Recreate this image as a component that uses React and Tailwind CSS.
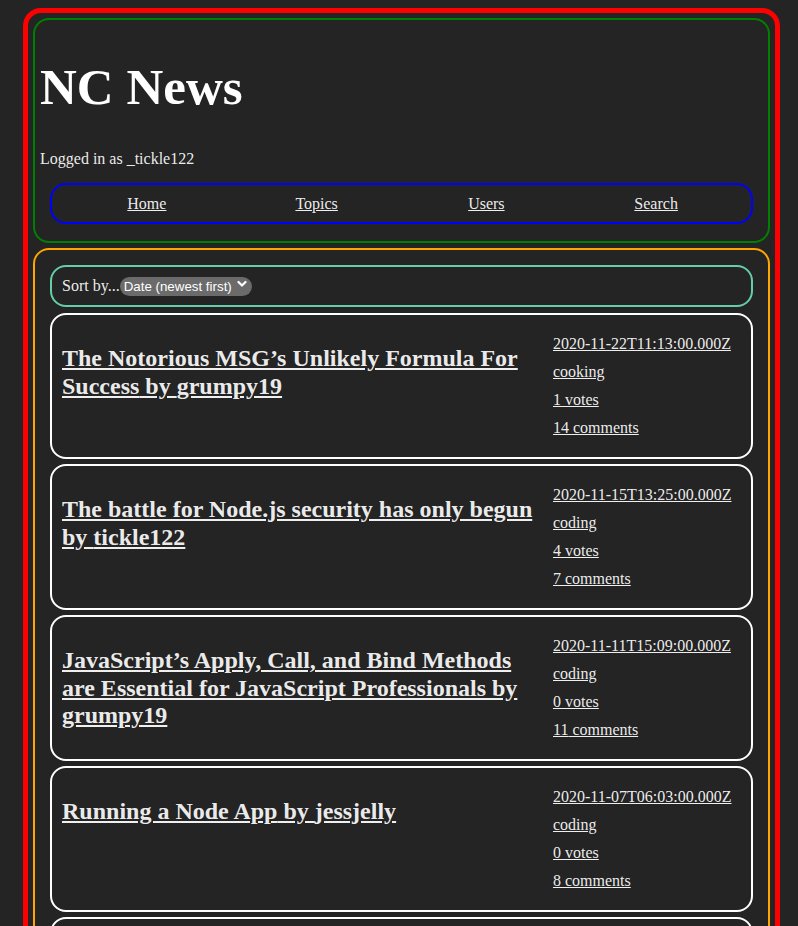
import React, { useState } from "react";

const articles = [
  {
    title: "The Notorious MSG’s Unlikely Formula For Success",
    author: "grumpy19",
    date: "2020-11-22T11:13:00.000Z",
    topic: "cooking",
    votes: 1,
    comments: 14,
  },
  {
    title: "The battle for Node.js security has only begun",
    author: "tickle122",
    date: "2020-11-15T13:25:00.000Z",
    topic: "coding",
    votes: 4,
    comments: 7,
  },
  {
    title: "JavaScript’s Apply, Call, and Bind Methods are Essential for JavaScript Professionals",
    author: "grumpy19",
    date: "2020-11-11T15:09:00.000Z",
    topic: "coding",
    votes: 0,
    comments: 11,
  },
  {
    title: "Running a Node App",
    author: "jessjelly",
    date: "2020-11-07T06:03:00.000Z",
    topic: "coding",
    votes: 0,
    comments: 8,
  },
  {
    title: "Making sense of Redux",
    author: "jessjelly",
    date: "2020-09-04T05:02:00.000Z",
    topic: "coding",
    votes: 0,
    comments: 3,
  },
];

const ArticleCard = ({ article }) => {
  return (
    <li className="border-2 border-white rounded-[16px] p-[10px] grid grid-cols-[1fr_188px] gap-x-[12px] h-[146px] overflow-hidden">
      <h2 className="mt-[20px] text-[24px] font-bold leading-[27.6px]">
        <a href="#" className="underline">
          {article.title} by {article.author}
        </a>
      </h2>
      <div className="flex flex-col py-[5px] text-[16px]">
        <a href="#" className="underline leading-[28px]">{article.date}</a>
        <a href="#" className="underline leading-[28px]">{article.topic}</a>
        <a href="#" className="underline leading-[28px]">{article.votes} votes</a>
        <a href="#" className="underline leading-[28px]">{article.comments} comments</a>
      </div>
    </li>
  );
};

const App = () => {
  const [sort, setSort] = useState("date_desc");

  return (
    <div className="min-h-screen bg-[#242424] text-white/[0.93] font-['Liberation_Serif',serif] pt-[8px] overflow-hidden">
      <div className="ml-[23px] w-[757px] border-[5px] border-[#ff0000] rounded-[18px] p-[5px] flex flex-col gap-[5px]">
        <header className="border-2 border-[#008000] rounded-[16px] px-[5px] pt-[4px] pb-[17px]">
          <h1 className="mt-[35px] text-[51px] font-bold leading-[57px] text-white">NC News</h1>
          <p className="mt-[34px] text-[16px] leading-[18px]">Logged in as _tickle122</p>
          <nav className="mt-[15px] mx-[10px] h-[41px] border-2 border-[#0000ff] rounded-[16px] px-[10px] grid grid-cols-4 items-center text-center text-[16px]">
            <a href="#" className="underline">Home</a>
            <a href="#" className="underline">Topics</a>
            <a href="#" className="underline">Users</a>
            <a href="#" className="underline">Search</a>
          </nav>
        </header>

        <main className="border-2 border-[#ffa500] rounded-[16px] px-[15px] pt-[15px] pb-[15px]">
          <div className="h-[42px] border-2 border-[#66cdaa] rounded-[16px] px-[10px] flex items-center text-[16px]">
            <label htmlFor="sort">Sort by...</label>
            <div className="relative">
              <select
                id="sort"
                value={sort}
                onChange={(e) => setSort(e.target.value)}
                className="appearance-none bg-[#6b6b6b] text-white rounded-full h-[19px] pl-[4px] pr-[19px] font-['Liberation_Sans',Arial,sans-serif] text-[13.33px] leading-[19px] outline-none"
              >
                <option value="date_desc">Date (newest first)</option>
                <option value="date_asc">Date (oldest first)</option>
                <option value="votes">Votes</option>
                <option value="comments">Comments</option>
              </select>
              <svg
                className="absolute right-[5px] top-[6px] pointer-events-none"
                width="10"
                height="9"
                viewBox="0 0 10 9"
                fill="none"
              >
                <path d="M1.5 2 L5 5.5 L8.5 2" stroke="white" strokeWidth="2.2" strokeLinecap="round" strokeLinejoin="round" />
              </svg>
            </div>
          </div>

          <ul className="mt-[6px] flex flex-col gap-[5px]">
            {articles.map((a) => (
              <ArticleCard key={a.date} article={a} />
            ))}
          </ul>
        </main>
      </div>
    </div>
  );
};

export default App;
